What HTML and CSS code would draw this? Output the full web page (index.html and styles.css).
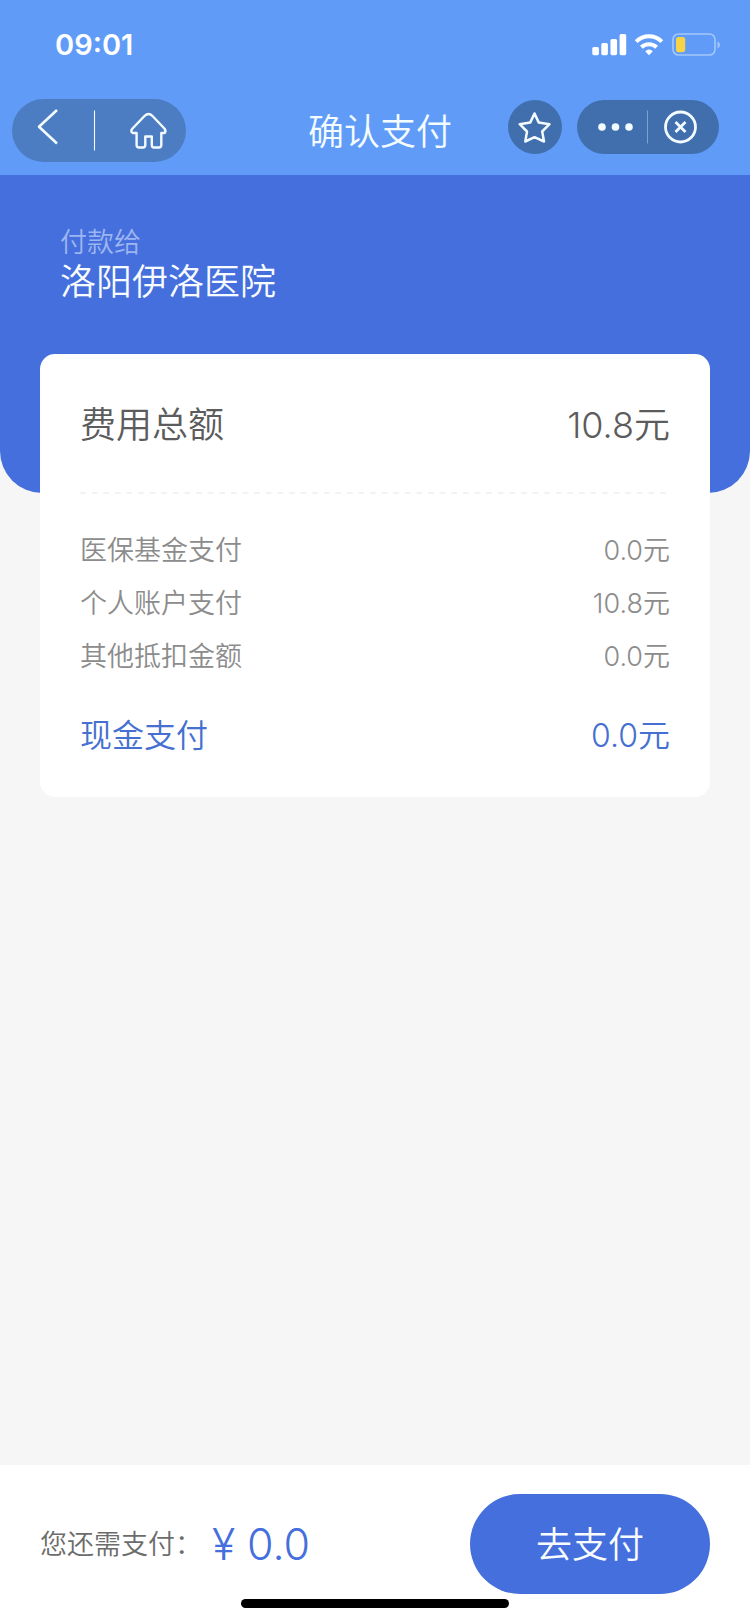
FILE: index.html
```html
<!DOCTYPE html>
<html lang="zh-CN">
<head>
<meta charset="utf-8">
<title>确认支付</title>
<link rel="stylesheet" href="styles.css">
</head>
<body>
<div class="screen">
  <header class="topbar">
    <div class="status">
      <span class="time">09:01</span>
      <svg class="status-icons" width="130" height="24" viewBox="0 0 130 24" fill="#fff">
        <rect x="1.3" y="15" width="6.6" height="8.2" rx="1.6"/>
        <rect x="10.3" y="11" width="6.6" height="12.2" rx="1.6"/>
        <rect x="19.5" y="7" width="6.6" height="16.2" rx="1.6"/>
        <rect x="28.6" y="2" width="6.6" height="21.2" rx="1.6"/>
        <g fill="none" stroke="#fff" stroke-width="4">
          <path d="M45.2 9.600a18.2 18.2 0 0 1 25.600 0"/>
          <path d="M50.4 15.200a11 11 0 0 1 15.200 0"/>
        </g>
        <path d="M54.2 19.200a5.800 5.800 0 0 1 7.600 0L58 23.200z"/>
        <rect x="82" y="2" width="42" height="21" rx="5.5" fill="none" stroke="#a3c7fa" stroke-width="1.6"/>
        <rect x="85" y="5" width="9.2" height="15.2" rx="2.6" fill="#f8d347"/>
        <path d="M126.5 9.200q2.500 1 2.500 3.500t-2.500 3.500z" fill="#a3c7fa"/>
      </svg>
    </div>
    <nav class="nav">
      <div class="pill pill-left">
        <svg width="174" height="63" viewBox="0 0 174 63" fill="none" stroke="#f2fbff" stroke-linejoin="round">
          <path d="M45 11L27 27.700L45 44.500" stroke-width="2.600"/>
          <path d="M82.500 11.500v40" stroke-width="1.100"/>
          <path d="M132.500 17Q136.500 13 140.500 17L152.400 29.500Q154.500 32.500 152.500 34H149.300V46Q149.300 48.500 146.800 48.500H142Q139.800 48.500 139.800 46V37.500H133.300V46Q133.300 48.500 131 48.500H127Q124.600 48.500 124.600 46V34H120.700Q118 32.500 120.500 29.500Z" stroke-width="2.400"/>
        </svg>
      </div>
      <h1 class="title">确认支付</h1>
      <div class="pill pill-star">
        <svg width="54" height="54" viewBox="0 0 54 54" fill="none" stroke="#f2fbff" stroke-width="2.500" stroke-linejoin="round">
          <path d="M26.500 13.500L30.700 22.400L41.500 24.200L34.200 31.500L36 41.500L26.500 37.200L17.300 41.500L19 31.500L11.700 24.200L22.300 22.400Z"/>
        </svg>
      </div>
      <div class="pill pill-menu">
        <svg width="142" height="54" viewBox="0 0 142 54" fill="none" stroke="#f2fbff">
          <g fill="#f2fbff" stroke="none"><circle cx="25" cy="27" r="3.800"/><circle cx="38.500" cy="27" r="3.800"/><circle cx="52" cy="27" r="3.800"/></g>
          <path d="M70.500 10.500v33" stroke="#7da3d0" stroke-width="1"/>
          <circle cx="103.500" cy="27" r="15" stroke-width="2.800"/>
          <path d="M98.500 22L108.500 32M108.500 22L98.500 32" stroke-width="2.800"/>
        </svg>
      </div>
    </nav>
  </header>
  <section class="hero">
    <p class="payee-label">付款给</p>
    <p class="payee">洛阳伊洛医院</p>
  </section>
  <main class="card">
    <div class="row total"><span>费用总额</span><span class="amount">10.8<span class="unit">元</span></span></div>
    <svg class="divider" width="588" height="2" viewBox="0 0 588 2"><path d="M0 1H588" stroke="#f0f0f0" stroke-width="1.500" stroke-dasharray="6 5.600"/></svg>
    <div class="details">
      <div class="row"><span>医保基金支付</span><span class="amount">0.0<span class="unit">元</span></span></div>
      <div class="row"><span>个人账户支付</span><span class="amount">10.8<span class="unit">元</span></span></div>
      <div class="row"><span>其他抵扣金额</span><span class="amount">0.0<span class="unit">元</span></span></div>
    </div>
    <div class="row cash"><span>现金支付</span><span class="amount">0.0<span class="unit">元</span></span></div>
  </main>
  <footer class="footer">
    <span class="due-label">您还需支付：</span>
    <span class="due"><span class="yen">¥</span><span>0.0</span></span>
    <button class="pay">去支付</button>
    <div class="home-indicator"></div>
  </footer>
</div>
</body>
</html>
```

FILE: styles.css
```css
* { box-sizing: border-box; }
body { margin: 0; }
p, h1 { margin: 0; }
.screen {
  width: 750px;
  height: 1623px;
  display: flex;
  flex-direction: column;
  background: #f6f6f6;
  font-family: Inter, "Noto Sans CJK SC DemiLight", "Noto Sans CJK SC", sans-serif;
  font-weight: 350;
  overflow: hidden;
}
.topbar { height: 175px; flex: none; background: #609cf7; color: #f4fcff; }
.status {
  height: 98px;
  padding: 32px 29px 0 55px;
  display: flex;
  justify-content: space-between;
}
.time { font-size: 29px; line-height: 26px; font-weight: 600; color: #fff; }
.status-icons { margin-left: auto; }
.nav { display: flex; align-items: flex-start; padding-left: 12px; }
.pill { flex: none; border-radius: 32px; overflow: hidden; }
.pill svg { display: block; }
.pill-left { width: 174px; height: 63px; margin-top: 1px; background: #4c7dc3; }
.title { margin: 8px 0 0 122px; width: 200px; font-size: 36px; line-height: 52px; font-weight: 350; }
.pill-star { width: 54px; height: 54px; margin-top: 2px; background: #416fad; }
.pill-menu { width: 142px; height: 54px; margin: 2px 0 0 15px; background: #416fad; }
.hero {
  height: 318px;
  flex: none;
  padding: 48px 60px 0;
  background: #456fdd;
  border-radius: 0 0 42px 42px;
}
.payee-label { font-size: 27px; line-height: 39px; color: #9db5f1; }
.payee { font-size: 36px; line-height: 40px; color: #f8fcff; }
.card {
  flex: none;
  height: 443px;
  margin: -139px 40px 0;
  padding: 45px 40px 0;
  border-radius: 15px;
  background: #fff;
}
.row { display: flex; justify-content: space-between; line-height: 53px; font-size: 27px; color: #8c8c8c; }
.amount { font-weight: 300; }
.unit { font-weight: 350; }
.total { font-size: 36px; color: #5c5c5c; }
.divider { display: block; margin-top: 40px; }
.details { margin-top: 30px; }
.cash { margin-top: 26px; font-size: 32px; color: #456fd0; }
.footer {
  position: relative;
  height: 158px;
  flex: none;
  margin-top: auto;
  padding: 29px 40px 0;
  display: flex;
  align-items: flex-start;
  background: #fff;
}
.due-label { width: 172px; font-size: 27px; line-height: 102px; white-space: nowrap; color: #6c6c6c; }
.due { display: flex; gap: 8px; font-size: 43px; line-height: 101px; font-weight: 300; color: #456fdd; }
.yen { width: 27px; font-weight: 350; }
.pay {
  width: 240px;
  height: 100px;
  margin-left: auto;
  padding: 3px 0 0;
  border: 0;
  border-radius: 50px;
  background: #456fdd;
  color: #f8fcff;
  font: 350 36px/97px Inter, "Noto Sans CJK SC DemiLight", "Noto Sans CJK SC", sans-serif;
}
.home-indicator {
  position: absolute;
  left: 241px;
  bottom: 15px;
  width: 268px;
  height: 9px;
  border-radius: 5px;
  background: #000;
}
```
